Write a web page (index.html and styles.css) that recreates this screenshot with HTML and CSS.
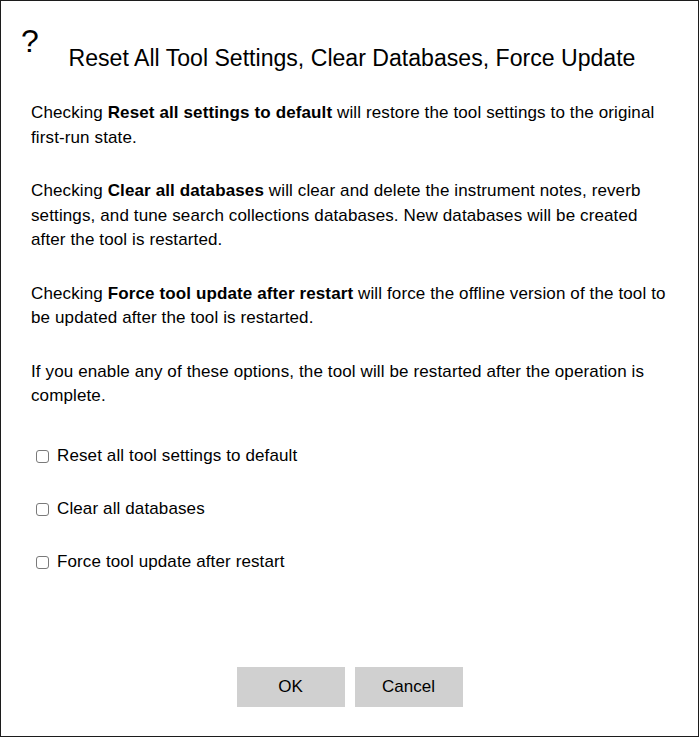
FILE: index.html
```html
<!DOCTYPE html>
<html>
<head>
<meta charset="utf-8">
<link rel="stylesheet" href="styles.css">
</head>
<body>
<div class="dialog">
  <header class="header">
    <span class="help">?</span>
    <h1 class="title">Reset All Tool Settings, Clear Databases, Force Update</h1>
    <span></span>
  </header>
  <div class="content">
    <p>Checking <b>Reset all settings to default</b> will restore the tool settings to the original first-run state.</p>
    <p>Checking <b>Clear all databases</b> will clear and delete the instrument notes, reverb settings, and tune search collections databases. New databases will be created after the tool is restarted.</p>
    <p>Checking <b>Force tool update after restart</b> will force the offline version of the tool to be updated after the tool is restarted.</p>
    <p>If you enable any of these options, the tool will be restarted after the operation is complete.</p>
    <div class="options">
      <label class="option"><input type="checkbox"><span>Reset all tool settings to default</span></label>
      <label class="option"><input type="checkbox"><span>Clear all databases</span></label>
      <label class="option"><input type="checkbox"><span>Force tool update after restart</span></label>
    </div>
  </div>
  <footer class="footer">
    <button class="btn">OK</button>
    <button class="btn">Cancel</button>
  </footer>
</div>
</body>
</html>
```
FILE: styles.css
```css
html, body {
  margin: 0;
  padding: 0;
  background: #fff;
}
body {
  font-family: "Liberation Sans", Arial, sans-serif;
  color: #000;
}
.dialog {
  box-sizing: border-box;
  width: 699px;
  height: 737px;
  border: 1.5px solid #1c1c1c;
  display: flex;
  flex-direction: column;
}
.header {
  display: grid;
  grid-template-columns: 1fr auto 1fr;
  align-items: start;
  padding: 22px 15px 0 20px;
}
.help {
  font-size: 32px;
  line-height: 36px;
}
.title {
  margin: 21px 0 0 0;
  font-size: 23.1px;
  font-weight: normal;
  line-height: 28px;
  white-space: nowrap;
}
.content {
  padding: 29px 28px 0 30px;
  font-size: 17px;
  letter-spacing: 0.12px;
  line-height: 24.5px;
}
.content p {
  margin: 0 0 29px 0;
}
.options {
  display: flex;
  flex-direction: column;
  gap: 28px;
  padding-left: 4px;
  margin-top: 35px;
}
.option {
  display: flex;
  align-items: center;
  height: 25px;
}
.option input {
  -webkit-appearance: none;
  appearance: none;
  box-sizing: border-box;
  width: 13px;
  height: 13px;
  margin: 0 8px 0 1px;
  border: 1px solid #7a7a7a;
  border-radius: 3px;
  background: #fff;
}
.footer {
  margin-top: auto;
  display: flex;
  justify-content: center;
  gap: 10px;
  padding-bottom: 29px;
}
.btn {
  width: 108px;
  height: 40px;
  border: none;
  background: #d0d0d0;
  font-family: "Liberation Sans", Arial, sans-serif;
  font-size: 17px;
  color: #000;
}
```
